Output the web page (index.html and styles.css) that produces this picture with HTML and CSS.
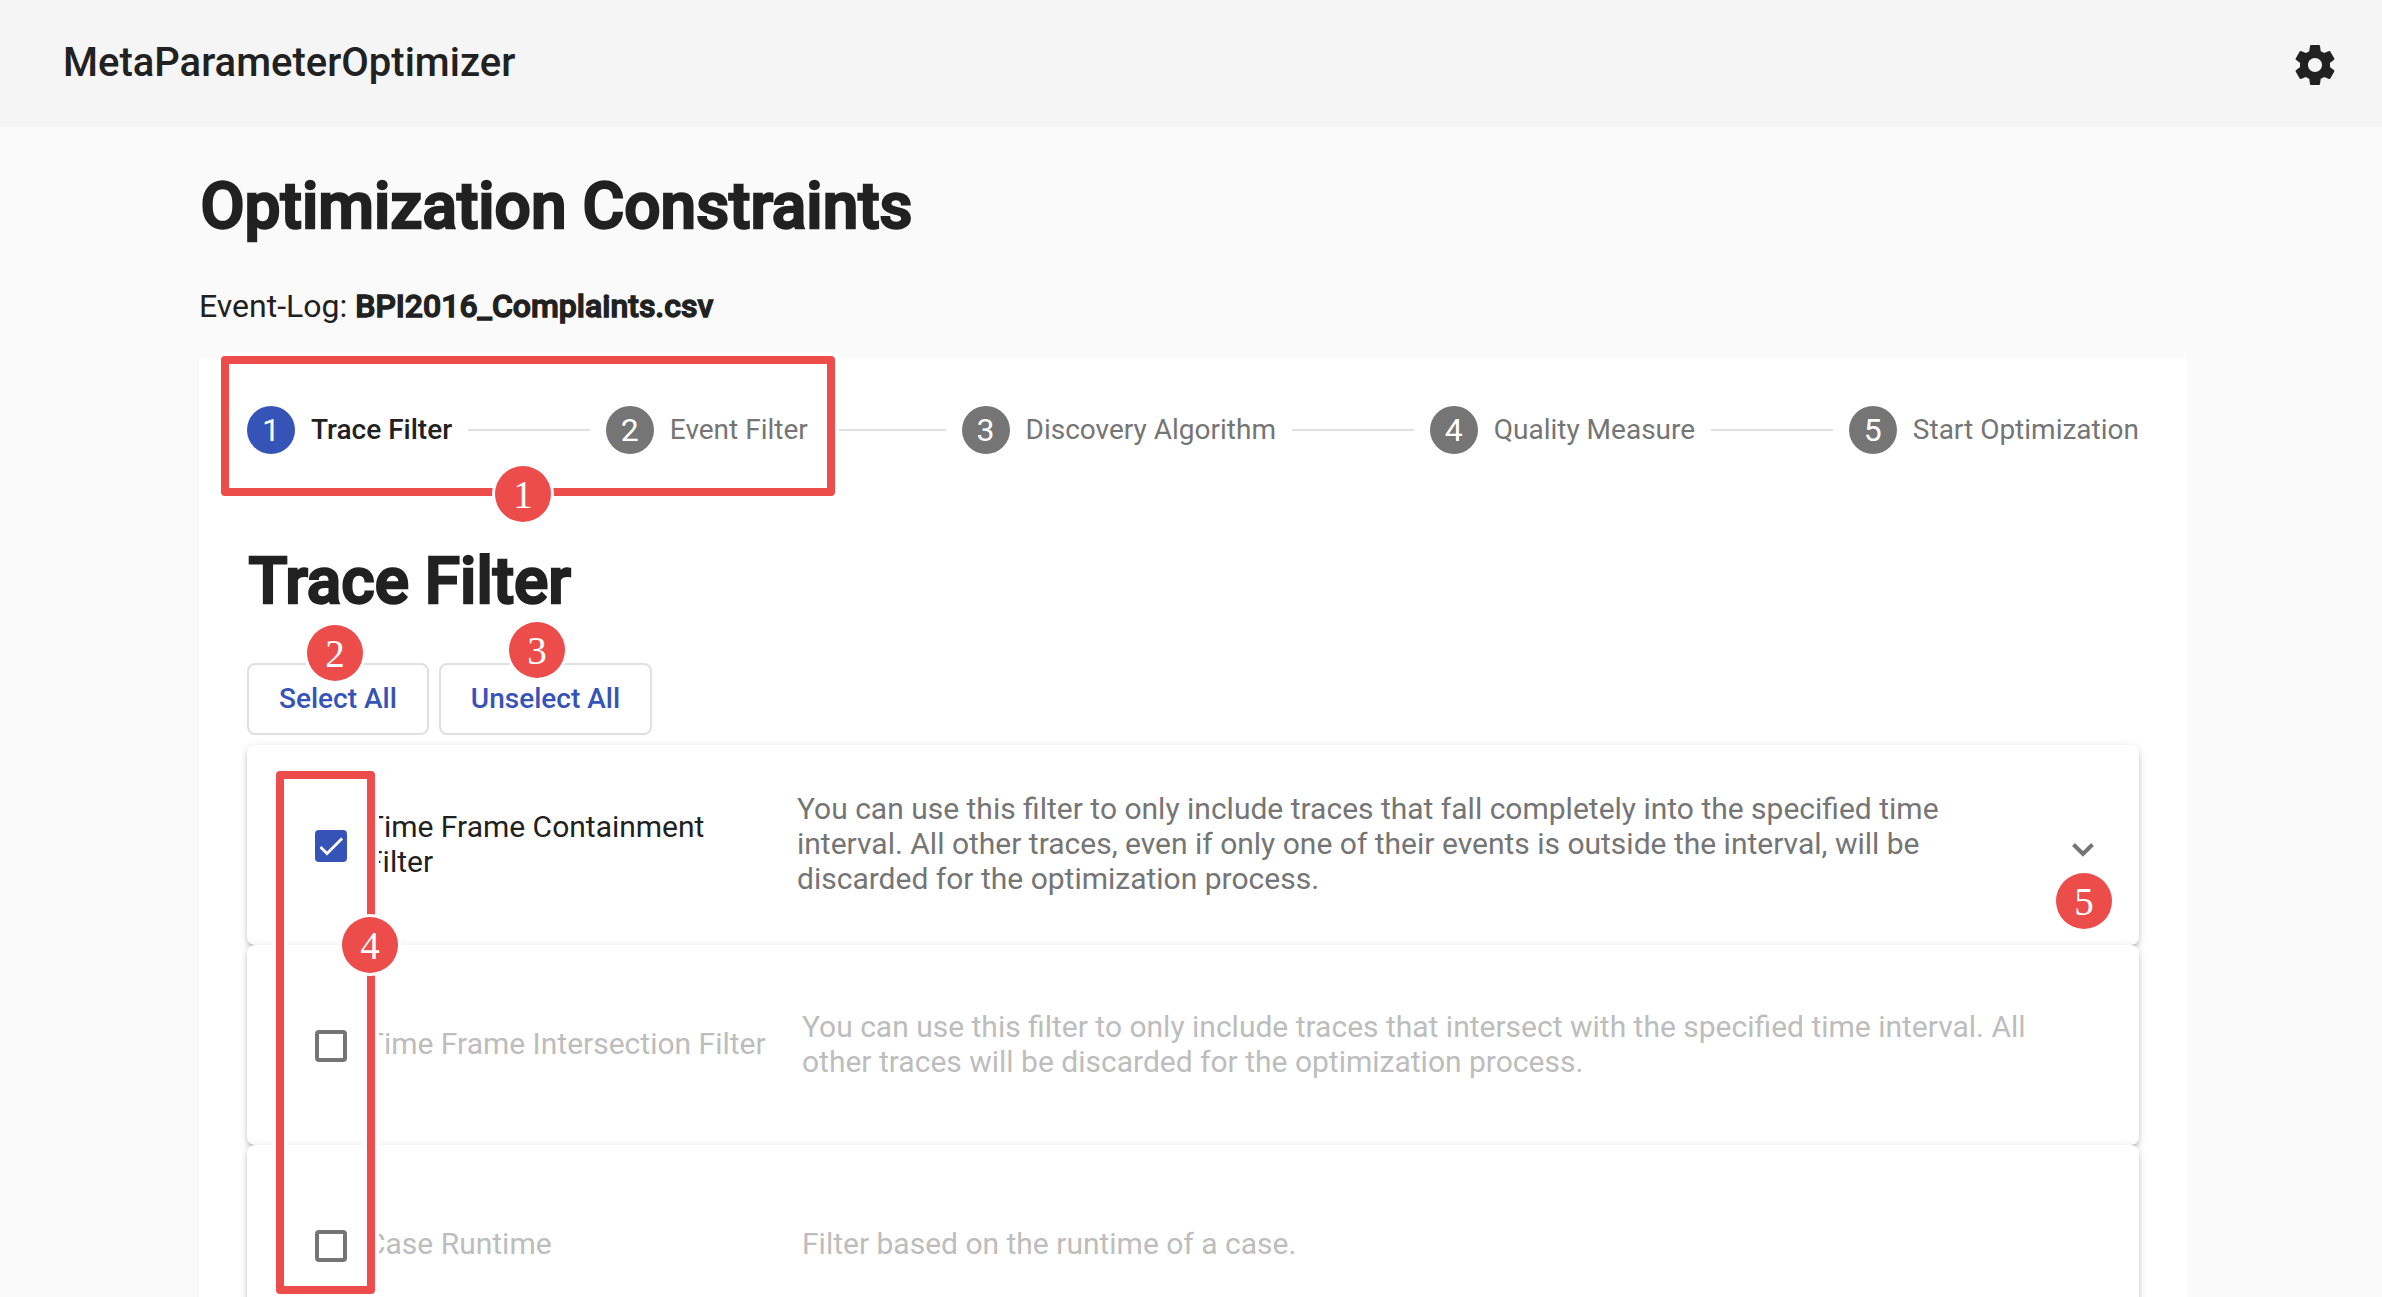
FILE: index.html
```html
<!DOCTYPE html>
<html lang="en">
<head>
<meta charset="utf-8">
<title>MetaParameterOptimizer</title>
<link rel="stylesheet" href="styles.css">
</head>
<body>
<header class="toolbar">
  <span class="brand">MetaParameterOptimizer</span>
  <svg class="gear" viewBox="0 0 24 24" aria-label="Settings"><path d="M19.43 12.98c.04-.32.07-.64.07-.98s-.03-.66-.07-.98l2.11-1.65c.19-.15.24-.42.12-.64l-2-3.46c-.12-.22-.39-.3-.61-.22l-2.49 1c-.52-.4-1.08-.73-1.69-.98l-.38-2.65C14.46 2.18 14.25 2 14 2h-4c-.25 0-.46.18-.49.42l-.38 2.65c-.61.25-1.17.59-1.69.98l-2.49-1c-.23-.09-.49 0-.61.22l-2 3.46c-.13.22-.07.49.12.64l2.11 1.65c-.04.32-.07.65-.07.98s.03.66.07.98l-2.11 1.65c-.19.15-.24.42-.12.64l2 3.46c.12.22.39.3.61.22l2.49-1c.52.4 1.08.73 1.69.98l.38 2.65c.03.24.24.42.49.42h4c.25 0 .46-.18.49-.42l.38-2.65c.61-.25 1.17-.59 1.69-.98l2.49 1c.23.09.49 0 .61-.22l2-3.46c.12-.22.07-.49-.12-.64l-2.11-1.65zM12 15.5c-1.93 0-3.5-1.57-3.5-3.5s1.57-3.5 3.5-3.5 3.5 1.57 3.5 3.5-1.57 3.5-3.5 3.5z"/></svg>
</header>
<main class="page">
  <h1 class="heading">Optimization Constraints</h1>
  <p class="log">Event-Log: <b class="log-name">BPI2016_Complaints.csv</b></p>
  <section class="card">
    <nav class="stepper">
      <div class="step active"><span class="num">1</span><span class="label">Trace Filter</span></div><i class="line"></i>
      <div class="step"><span class="num">2</span><span class="label">Event Filter</span></div><i class="line"></i>
      <div class="step"><span class="num">3</span><span class="label">Discovery Algorithm</span></div><i class="line"></i>
      <div class="step"><span class="num">4</span><span class="label">Quality Measure</span></div><i class="line"></i>
      <div class="step"><span class="num">5</span><span class="label">Start Optimization</span></div>
    </nav>
    <h2 class="heading">Trace Filter</h2>
    <div class="actions">
      <button class="btn">Select All</button>
      <button class="btn">Unselect All</button>
    </div>
    <div class="panel">
      <span class="box checked"><svg viewBox="0 0 24 24"><path d="M4.1 12.7 9 17.6 20.3 6.3"/></svg></span>
      <span class="name">Time Frame Containment Filter</span>
      <span class="desc">You can use this filter to only include traces that fall completely into the specified time interval. All other traces, even if only one of their events is outside the interval, will be discarded for the optimization process.</span>
      <svg class="chevron" viewBox="0 0 24 16"><path d="M2.5 2.5 12 12 21.5 2.5"/></svg>
    </div>
    <div class="panel disabled">
      <span class="box"></span>
      <span class="name">Time Frame Intersection Filter</span>
      <span class="desc">You can use this filter to only include traces that intersect with the specified time interval. All other traces will be discarded for the optimization process.</span>
    </div>
    <div class="panel disabled">
      <span class="box"></span>
      <span class="name">Case Runtime</span>
      <span class="desc">Filter based on the runtime of a case.</span>
    </div>
  </section>
</main>
<div class="frame frame-steps"></div>
<div class="frame frame-checks"></div>
<span class="badge b1">1</span>
<span class="badge b2">2</span>
<span class="badge b3">3</span>
<span class="badge b4">4</span>
<span class="badge b5">5</span>
</body>
</html>
```
FILE: styles.css
```css
* { box-sizing: border-box; }

body {
  margin: 0;
  position: relative;
  height: 1297px;
  overflow: hidden;
  background: #fafafa;
  color: #212121;
  font-family: Roboto, sans-serif;
}

.toolbar {
  display: flex;
  align-items: center;
  justify-content: space-between;
  height: 127px;
  padding: 0 43px 0 63px;
  background: #f5f5f5;
}

.brand {
  font-size: 40px;
  font-weight: 500;
  line-height: 48px;
  margin-bottom: 1px;
}

.gear {
  width: 48px;
  height: 48px;
  margin-top: 3px;
  fill: #212121;
}

.page {
  width: 1988px;
  margin: 0 195px 0 199px;
}

.heading {
  margin: 0;
  padding-left: 1.5px;
  font-size: 64px;
  font-weight: 500;
  line-height: 76px;
  -webkit-text-stroke: 2.4px #212121;
}

.page > .heading { padding-top: 42px; }

.log {
  margin: 42px 0 0;
  font-size: 32px;
  line-height: 38px;
  padding-bottom: 33px;
}

.log-name {
  font-weight: 500;
  -webkit-text-stroke: 1.3px #212121;
}

.card {
  height: 960px;
  padding: 0 48px;
  background: #fff;
}

.stepper {
  display: flex;
  align-items: center;
  gap: 16px;
  height: 144px;
  font-size: 28px;
  color: #757575;
}

.step {
  display: flex;
  align-items: center;
  gap: 16px;
  white-space: nowrap;
}

.label { padding-bottom: 2px; }

.num {
  width: 48px;
  height: 48px;
  border-radius: 50%;
  background: #757575;
  color: #fff;
  font-size: 32px;
  line-height: 48px;
  text-align: center;
}

.active { color: #212121; font-weight: 500; }
.active .num { background: #3653b8; font-weight: 400; }

.line {
  flex: 1;
  height: 2px;
  background: #e0e0e0;
}

.card > .heading { padding-top: 42px; }

.actions {
  display: flex;
  gap: 10px;
  margin: 43px 0 10px;
}

.btn {
  height: 72px;
  padding: 0 30px 1px;
  border: 2px solid #e0e0e0;
  border-radius: 8px;
  background: #fff;
  color: #3653b8;
  font: 500 28px Roboto, sans-serif;
}

.panel {
  display: flex;
  align-items: center;
  height: 200px;
  padding: 0 44px 0 68px;
  border-radius: 8px;
  background: #fff;
  box-shadow: 0 6px 2px -4px rgba(0,0,0,.2), 0 4px 4px rgba(0,0,0,.14), 0 2px 10px rgba(0,0,0,.12);
  font-size: 30px;
  line-height: 35px;
}

.box {
  flex: none;
  width: 32px;
  height: 32px;
  margin: 2px 19px 0 0;
  border: 4px solid #757575;
  border-radius: 4px;
}

.checked {
  border: 0;
  background: #3653b8;
}

.checked svg {
  display: block;
  width: 32px;
  height: 32px;
  fill: none;
  stroke: #fff;
  stroke-width: 2.1;
}

.name {
  flex: none;
  width: 410px;
  padding: 0 20px 3px 0;
}

.desc {
  width: 1180px;
  margin-left: 21px;
  padding-bottom: 3px;
  color: #757575;
}

.disabled .name { width: 415px; padding-right: 0; }
.disabled .desc { width: 1240px; }
.disabled .name, .disabled .desc { color: #bdbdbd; }

.chevron {
  width: 24px;
  height: 16px;
  margin: 9px 0 0 auto;
  fill: none;
  stroke: #757575;
  stroke-width: 4;
}

/* Tutorial callouts drawn over the page */
.frame {
  position: absolute;
  border: 8px solid #ec4d4b;
  border-radius: 4px;
  box-shadow: 0 0 0 4px #fff, inset 0 0 0 4px #fff;
}

.frame-steps { left: 221px; top: 356px; width: 614px; height: 140px; }
.frame-checks { left: 276px; top: 771px; width: 99px; height: 523px; }

.badge {
  position: absolute;
  width: 56px;
  height: 56px;
  border-radius: 50%;
  background: #ec4d4b;
  box-shadow: 0 0 0 3px #fff;
  color: #fff;
  font: 39px/57px "Liberation Serif", serif;
  text-align: center;
}

.b1 { left: 495px; top: 466px; }
.b2 { left: 307px; top: 625px; }
.b3 { left: 509px; top: 622px; }
.b4 { left: 342px; top: 917px; }
.b5 { left: 2056px; top: 873px; }
```
